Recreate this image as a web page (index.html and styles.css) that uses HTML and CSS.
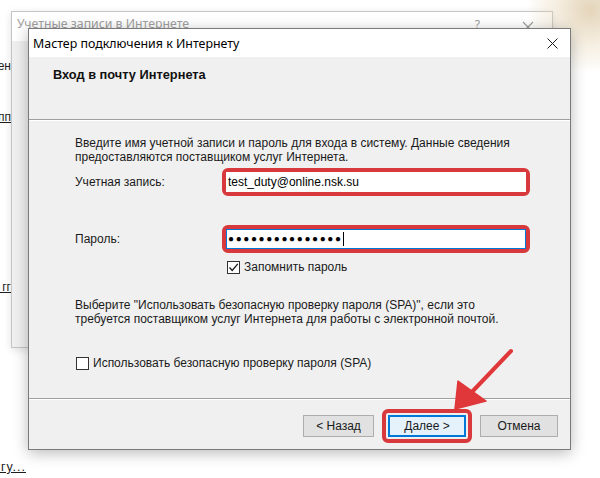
FILE: index.html
```html
<!DOCTYPE html>
<html lang="ru">
<head>
<meta charset="utf-8">
<title>Мастер подключения к Интернету</title>
<link rel="stylesheet" href="styles.css">
</head>
<body>
<div class="scene">
  <div class="page-bits">
    <div class="bit bit-1">Изменен</div>
    <div class="bit bit-2 link">Свойства пп</div>
    <div class="bit bit-3 link">Импорт гг</div>
    <div class="bit bit-4 link">Добавить услугу...</div>
  </div>

  <div class="back-window">
    <div class="bw-title">
      <span class="bw-caption">Учетные записи в Интернете</span>
      <span class="bw-help">?</span>
      <svg class="bw-close" width="12" height="12" viewBox="0 0 12 12"><path d="M1 1L11 11M11 1L1 11" stroke="#9a9a9a" stroke-width="1.1" fill="none"/></svg>
    </div>
    <div class="bw-body"></div>
  </div>

  <div class="glow"></div>

  <div class="dialog">
    <div class="titlebar">
      <span class="caption">Мастер подключения к Интернету</span>
      <svg class="close" width="11" height="11" viewBox="0 0 11 11"><path d="M0.5 0.5L10.5 10.5M10.5 0.5L0.5 10.5" stroke="#1a1a1a" stroke-width="1" fill="none"/></svg>
    </div>
    <div class="header">Вход в почту Интернета</div>
    <div class="sep"></div>
    <div class="content">
      <p class="text">Введите имя учетной записи и пароль для входа в систему. Данные сведения<br>предоставляются поставщиком услуг Интернета.</p>
      <div class="field field-account">
        <span class="label">Учетная запись:</span>
        <div class="hl"><div class="input">test_duty@online.nsk.su</div></div>
      </div>
      <div class="field field-password">
        <span class="label">Пароль:</span>
        <div class="hl"><div class="input input-focus"><span class="dots">●●●●●●●●●●●●●●●</span><span class="caret"></span></div></div>
      </div>
      <div class="check check-remember">
        <span class="box"><svg width="11" height="11" viewBox="0 0 11 11"><path d="M1.5 5.5L4.2 8.5L9.8 1.8" stroke="#1a1a1a" stroke-width="1.3" fill="none"/></svg></span>
        <span>Запомнить пароль</span>
      </div>
      <p class="text text-spa">Выберите "Использовать безопасную проверку пароля (SPA)", если это<br>требуется поставщиком услуг Интернета для работы с электронной почтой.</p>
      <div class="check check-spa">
        <span class="box"></span>
        <span>Использовать безопасную проверку пароля (SPA)</span>
      </div>
    </div>
    <div class="footer">
      <div class="sep"></div>
      <div class="buttons">
        <button class="btn btn-back">&lt; Назад</button>
        <span class="btn-wrap"><button class="btn btn-default">Далее &gt;</button></span>
        <button class="btn">Отмена</button>
      </div>
    </div>
  </div>

  <svg class="arrow" width="600" height="478" viewBox="0 0 600 478">
    <line x1="511" y1="351" x2="470" y2="394" stroke="#e0373a" stroke-width="4" stroke-linecap="round"/>
    <polygon points="455,409 458,381 486,401" fill="#e0373a" stroke="#e0373a" stroke-width="1.5" stroke-linejoin="round"/>
  </svg>
</div>
</body>
</html>
```

FILE: styles.css
```css
html, body {
  margin: 0;
  padding: 0;
}
body {
  width: 600px;
  height: 478px;
  background: #ffffff;
  font-family: "Liberation Sans", Arial, sans-serif;
  font-size: 12px;
  color: #000;
  overflow: hidden;
}
.scene {
  position: relative;
  width: 600px;
  height: 478px;
  overflow: hidden;
}

/* page text peeking out from behind the windows */
.page-bits {
  display: flex;
  flex-direction: column;
  margin-left: -110px;
  padding-top: 59px;
  color: #1e1e1e;
  font-size: 12px;
  line-height: 14px;
}
.bit {
  width: 121px;
  text-align: right;
  white-space: nowrap;
}
.link { text-decoration: underline; }
.bit-2 { margin-top: 37px; }
.bit-3 { margin-top: 156px; }
.bit-4 {
  margin-top: 166px;
  width: 136px;
  font-size: 12.5px;
  letter-spacing: 1px;
}

/* background window */
.back-window {
  position: absolute;
  left: 11px;
  top: 11px;
  width: 542px;
  height: 337px;
  box-sizing: border-box;
  border: 1px solid #c4c4c4;
  background: #f0f0f0;
  box-shadow: 0 2px 8px rgba(0,0,0,0.12);
  display: flex;
  flex-direction: column;
}
.bw-title {
  height: 29px;
  background: #fff;
  display: flex;
  align-items: flex-start;
  padding: 3px 0 0 5px;
  box-sizing: border-box;
  color: #a0a0a0;
  font-family: "Noto Sans", sans-serif;
  font-size: 12.3px;
  line-height: 17px;
}
.bw-caption { flex: 1; }
.bw-help { margin-right: 42px; margin-top: 1px; }
.bw-close { margin-right: 18px; margin-top: 6px; }
.bw-body { flex: 1; }

.glow {
  position: absolute;
  right: -30px;
  top: -30px;
  width: 104px;
  height: 104px;
  background: radial-gradient(circle at 62% 38%, rgba(210,184,140,0.6) 0%, rgba(228,208,172,0.4) 35%, rgba(255,255,255,0) 70%);
}

/* main dialog */
.dialog {
  position: absolute;
  left: 28px;
  top: 28px;
  width: 543px;
  height: 422px;
  box-sizing: border-box;
  border: 1px solid #7a7a7a;
  background: #f0f0f0;
  box-shadow: 0 3px 14px rgba(0,0,0,0.28);
  display: flex;
  flex-direction: column;
}
.titlebar {
  height: 28px;
  flex: none;
  background: #fff;
  display: flex;
  align-items: center;
  padding-left: 4px;
  font-family: "Noto Sans", sans-serif;
  font-size: 12.4px;
  color: #000;
}
.caption { flex: 1; }
.close { margin-right: 12px; }

.header {
  height: 62px;
  flex: none;
  box-sizing: border-box;
  padding: 11px 0 0 24px;
  font-weight: bold;
  font-size: 12.8px;
  line-height: 14px;
  color: #111;
}
.sep {
  height: 0;
  border-top: 1px solid #a0a0a0;
  border-bottom: 1px solid #ffffff;
  flex: none;
}

.content {
  flex: 1;
  padding-left: 46px;
  display: flex;
  flex-direction: column;
}
.text {
  margin: 15px 0 0 0;
  line-height: 14px;
  color: #1a1a1a;
}
.field {
  display: flex;
  align-items: center;
  margin-top: 4px;
}
.field-password { margin-top: 29px; }
.label {
  width: 147px;
  flex: none;
  color: #1a1a1a;
}
.hl {
  width: 308px;
  box-sizing: border-box;
  border: 4px solid #d8393c;
  border-radius: 6px;
  background: #fff;
}
.input {
  height: 20px;
  box-sizing: border-box;
  padding-left: 2px;
  display: flex;
  align-items: center;
  background: #fff;
  color: #000;
}
.input-focus {
  border: 1px solid #0078d7;
  padding-left: 1px;
}
.dots {
  font-family: "Liberation Sans", sans-serif;
  font-size: 10px;
  letter-spacing: 1.6px;
  line-height: 1;
}
.caret {
  width: 1px;
  height: 14px;
  background: #000;
  margin-left: 0;
}

.check {
  display: flex;
  align-items: center;
  gap: 4px;
  color: #1a1a1a;
}
.check-remember {
  margin-top: 7px;
  padding-left: 152px;
}
.check-spa {
  margin-top: 30px;
  padding-left: 1px;
}
.box {
  width: 13px;
  height: 13px;
  box-sizing: border-box;
  border: 1px solid #333;
  background: #fff;
  display: flex;
  align-items: center;
  justify-content: center;
}
.text-spa { margin-top: 24px; }

.footer {
  flex: none;
  display: flex;
  flex-direction: column;
}
.buttons {
  display: flex;
  justify-content: flex-end;
  gap: 14px;
  padding: 15px 12px 12px 0;
}
.btn {
  width: 78px;
  height: 22px;
  box-sizing: border-box;
  border: 1px solid #adadad;
  background: #e1e1e1;
  font-family: "Liberation Sans", Arial, sans-serif;
  font-size: 12px;
  color: #1a1a1a;
  padding: 0;
  margin: 0;
}
.btn-back { width: 71px; }
.btn-wrap {
  position: relative;
  display: flex;
}
.btn-default {
  border: 2px solid #0078d7;
  background: #e5f1fb;
}
.btn-wrap::after {
  content: "";
  position: absolute;
  left: -6px;
  top: -6px;
  right: -6px;
  bottom: -6px;
  border: 4px solid #d8393c;
  border-radius: 6px;
  pointer-events: none;
}

.arrow {
  position: absolute;
  left: 0;
  top: 0;
  pointer-events: none;
}
```
